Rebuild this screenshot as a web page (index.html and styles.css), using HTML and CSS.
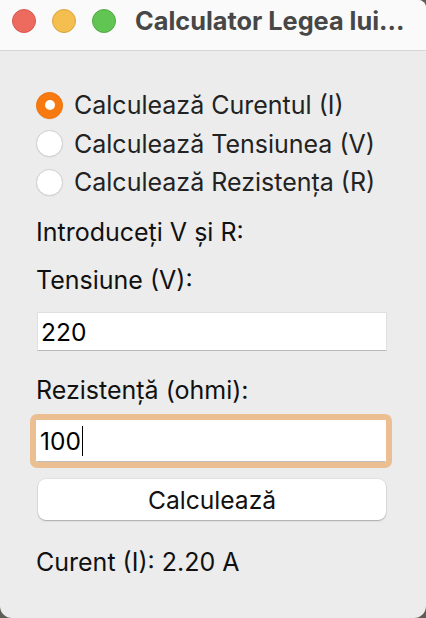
FILE: index.html
```html
<!DOCTYPE html>
<html lang="ro">
<head>
<meta charset="utf-8">
<title>Calculator Legea lui Ohm</title>
<link rel="stylesheet" href="styles.css">
</head>
<body>
<div class="window">
  <div class="titlebar">
    <div class="lights">
      <span class="light red"></span>
      <span class="light yellow"></span>
      <span class="light green"></span>
    </div>
    <div class="title">Calculator Legea lui...</div>
  </div>
  <div class="content">
    <div class="radios">
      <div class="radio-row"><span class="radio checked"></span><span class="radio-label">Calculează Curentul (I)</span></div>
      <div class="radio-row"><span class="radio"></span><span class="radio-label">Calculează Tensiunea (V)</span></div>
      <div class="radio-row"><span class="radio"></span><span class="radio-label">Calculează Rezistența (R)</span></div>
    </div>
    <div class="label intro">Introduceți V și R:</div>
    <div class="label lbl-v">Tensiune (V):</div>
    <div class="field field-v"><span class="value">220</span></div>
    <div class="label lbl-r">Rezistență (ohmi):</div>
    <div class="focus-ring"><div class="field field-r"><span class="value">100</span><span class="caret"></span></div></div>
    <div class="button">Calculează</div>
    <div class="label result">Curent (I): 2.20 A</div>
  </div>
</div>
</body>
</html>
```
FILE: styles.css
```css
html, body {
  margin: 0;
  padding: 0;
}
body {
  background: #5d5d55;
  width: 426px;
  height: 618px;
  overflow: hidden;
  font-family: "Inter", "Liberation Sans", sans-serif;
}
.window {
  width: 426px;
  height: 618px;
  background: #ececec;
  border-radius: 0 8px 12px 12px;
  overflow: hidden;
  display: flex;
  flex-direction: column;
}
.titlebar {
  height: 50px;
  flex: none;
  background: #fafafa;
  border-bottom: 1px solid #d6d6d6;
  display: flex;
  align-items: center;
  padding-left: 12px;
  box-sizing: content-box;
}
.lights {
  display: flex;
  gap: 16px;
  margin-top: -8px;
}
.light {
  width: 24px;
  height: 24px;
  border-radius: 50%;
  box-sizing: border-box;
}
.red { background: #ec6a5e; border: 1px solid #d65a4f; }
.yellow { background: #f4bf4f; border: 1px solid #d9a53f; }
.green { background: #61c554; border: 1px solid #52a945; }
.title {
  margin-left: 19px;
  margin-top: -8px;
  font-weight: 700;
  font-size: 25.3px;
  line-height: 30px;
  color: #474747;
  white-space: nowrap;
}
.content {
  padding-left: 36px;
  display: flex;
  flex-direction: column;
  align-items: flex-start;
}
.radios {
  margin-top: 35px;
  display: flex;
  flex-direction: column;
}
.radio-row {
  height: 38.5px;
  display: flex;
  align-items: center;
}
.radio {
  width: 27px;
  height: 27px;
  border-radius: 50%;
  box-sizing: border-box;
  background: #ffffff;
  border: 1px solid #cfcfcf;
  box-shadow: 0 0.5px 1px rgba(0,0,0,0.08);
  position: relative;
  flex: none;
}
.radio.checked {
  background: #f7790f;
  border-color: #ee7208;
}
.radio.checked::after {
  content: "";
  position: absolute;
  left: 50%;
  top: 50%;
  width: 10px;
  height: 10px;
  margin: -5px 0 0 -5px;
  background: #fff;
  border-radius: 50%;
}
.radio-label {
  margin-left: 11px;
  font-size: 25px;
  line-height: 30px;
  color: #222;
  white-space: nowrap;
}
.label {
  font-size: 25px;
  line-height: 28px;
  color: #111;
  white-space: nowrap;
}
.intro { margin-top: 16.5px; }
.lbl-v { margin-top: 20px; }
.field {
  width: 350px;
  height: 39px;
  box-sizing: border-box;
  background: #fff;
  border: 1px solid #e0e0e0;
  border-bottom: 1.5px solid #b9b9b9;
  display: flex;
  align-items: center;
  padding-left: 3px;
  font-size: 24.5px;
  color: #000;
}
.field-v { margin-top: 18px; margin-left: 1px; }
.lbl-r { margin-top: 25px; }
.focus-ring {
  margin-top: 10px;
  margin-left: -6px;
  padding: 6px;
  background: #ebbf91;
  border-radius: 7px;
}
.field-r {
  height: 42px;
  border-color: #fff;
  border-bottom-color: #bdbdbd;
}
.caret {
  width: 1.5px;
  height: 30px;
  background: #000;
  margin-left: 1px;
}
.button {
  margin-top: 11px;
  margin-left: 2px;
  width: 348px;
  height: 41px;
  box-sizing: border-box;
  background: #fff;
  border-radius: 8px;
  box-shadow: 0 0 0 0.5px rgba(0,0,0,0.08), 0 1px 1.5px rgba(0,0,0,0.25);
  display: flex;
  align-items: center;
  justify-content: center;
  font-size: 24.6px;
  color: #111;
}
.result { margin-top: 28px; }
```
